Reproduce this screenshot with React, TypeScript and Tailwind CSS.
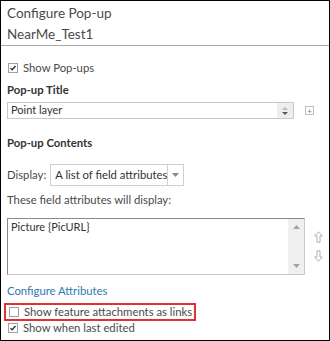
import { useState } from "react";

const font = { fontFamily: '"Lato", "Open Sans", sans-serif' };

function Check({ checked }: { checked: boolean }) {
  return (
    <span className="flex h-[10px] w-[10px] shrink-0 items-center justify-center border border-[#a0a0a0] bg-white">
      {checked ? (
        <svg width="8" height="8" viewBox="0 0 8 8">
          <path d="M1.5 4.2 L3.2 5.8 L6.5 2" fill="none" stroke="#333" strokeWidth="1.4" />
        </svg>
      ) : null}
    </span>
  );
}

export default function App() {
  const [showPopups] = useState(true);

  return (
    <div
      className="h-[341px] w-[330px] overflow-hidden whitespace-nowrap border border-black bg-white text-[#4a4a4a]"
      style={font}
    >
      <div className="border-b border-[#a8a8a8] pb-[2px] pl-[6px]">
        <div className="h-[23px] pt-[3px] text-[13.5px] leading-[18px]">Configure Pop-up</div>
        <div className="h-[19px] pt-[1px] text-[13.5px] leading-[18px]">NearMe_Test1</div>
      </div>

      <div className="px-[6px]">
        <div className="mt-[15px] flex h-[14px] items-center gap-[5px] pl-[1px] text-[11.3px]">
          <Check checked={showPopups} />
          <span>Show Pop-ups</span>
        </div>

        <div className="mt-[7px] text-[11.3px] font-bold leading-[16px] text-[#333]">Pop-up Title</div>

        <div className="mt-[4px] flex items-center">
          <div className="flex h-[17px] w-[287px] items-center justify-between border border-[#c8c8c8] bg-white pl-[3px] text-[11px] text-[#333]">
            <span>Point layer</span>
            <span className="flex h-full w-[16px] flex-col items-center justify-center bg-[#eeeeee]">
              <svg width="8" height="10" viewBox="0 0 8 10">
                <path d="M1 4 L4 1 L7 4 Z" fill="#bbb" />
                <path d="M1 6 L4 9 L7 6 Z" fill="#555" />
              </svg>
            </span>
          </div>
          <span className="ml-[11px] flex h-[9px] w-[9px] items-center justify-center border border-[#bdbdbd] text-[8px] leading-none text-[#777]">
            +
          </span>
        </div>

        <div className="mt-[16px] text-[11.3px] font-bold leading-[16px] text-[#333]">Pop-up Contents</div>

        <div className="mt-[13px] flex items-center gap-[4px] text-[11.3px]">
          <span>Display:</span>
          <div className="flex h-[22px] w-[134px] items-center border border-[#cfcfcf] bg-white">
            <span className="flex-1 pl-[4px] text-[11.3px] text-[#333]">A list of field attributes</span>
            <span className="flex h-full w-[16px] items-center justify-center border-l border-[#cfcfcf]">
              <svg width="7" height="4" viewBox="0 0 7 4">
                <path d="M0 0 L7 0 L3.5 4 Z" fill="#888" />
              </svg>
            </span>
          </div>
        </div>

        <div className="mt-[6px] text-[11.3px] leading-[16px]">These field attributes will display:</div>

        <div className="mt-[10px] flex items-center">
          <div className="flex h-[57px] w-[303px] border border-[#8a8a8a] border-b-[#c8c8c8] border-r-[#c8c8c8] bg-white">
            <div className="flex-1 pl-[3px] pt-[1px] text-[11px] leading-[14px] text-[#333]">Picture {"{PicURL}"}</div>
            <div className="flex w-[16px] flex-col items-center justify-between bg-[#f0f0f0] py-[6px]">
              <svg width="7" height="4" viewBox="0 0 7 4">
                <path d="M3.5 0 L7 4 L0 4 Z" fill="#a3a3a3" />
              </svg>
              <svg width="7" height="4" viewBox="0 0 7 4">
                <path d="M0 0 L7 0 L3.5 4 Z" fill="#a3a3a3" />
              </svg>
            </div>
          </div>
          <div className="ml-[9px] flex flex-col gap-[7px]">
            <svg width="9" height="12" viewBox="0 0 9 12">
              <path d="M4.5 0.8 L8.3 5 L6 5 L6 11.2 L3 11.2 L3 5 L0.7 5 Z" fill="#fff" stroke="#b0b0b0" strokeWidth="1" />
            </svg>
            <svg width="9" height="12" viewBox="0 0 9 12">
              <path d="M4.5 11.2 L8.3 7 L6 7 L6 0.8 L3 0.8 L3 7 L0.7 7 Z" fill="#fff" stroke="#b0b0b0" strokeWidth="1" />
            </svg>
          </div>
        </div>

        <div className="mt-[8px] text-[11.3px] leading-[16px] text-[#2b79b0]">Configure Attributes</div>
      </div>

      <div className="ml-[3px] mt-[4px] flex h-[18px] w-[192px] items-center gap-[5px] border-2 border-[#e0302f] pl-[3px] text-[11.3px]">
        <Check checked={false} />
        <span>Show feature attachments as links</span>
      </div>
      <div className="flex h-[14px] items-center gap-[5px] pl-[7px] text-[11.3px]">
        <Check checked={true} />
        <span>Show when last edited</span>
      </div>
    </div>
  );
}
